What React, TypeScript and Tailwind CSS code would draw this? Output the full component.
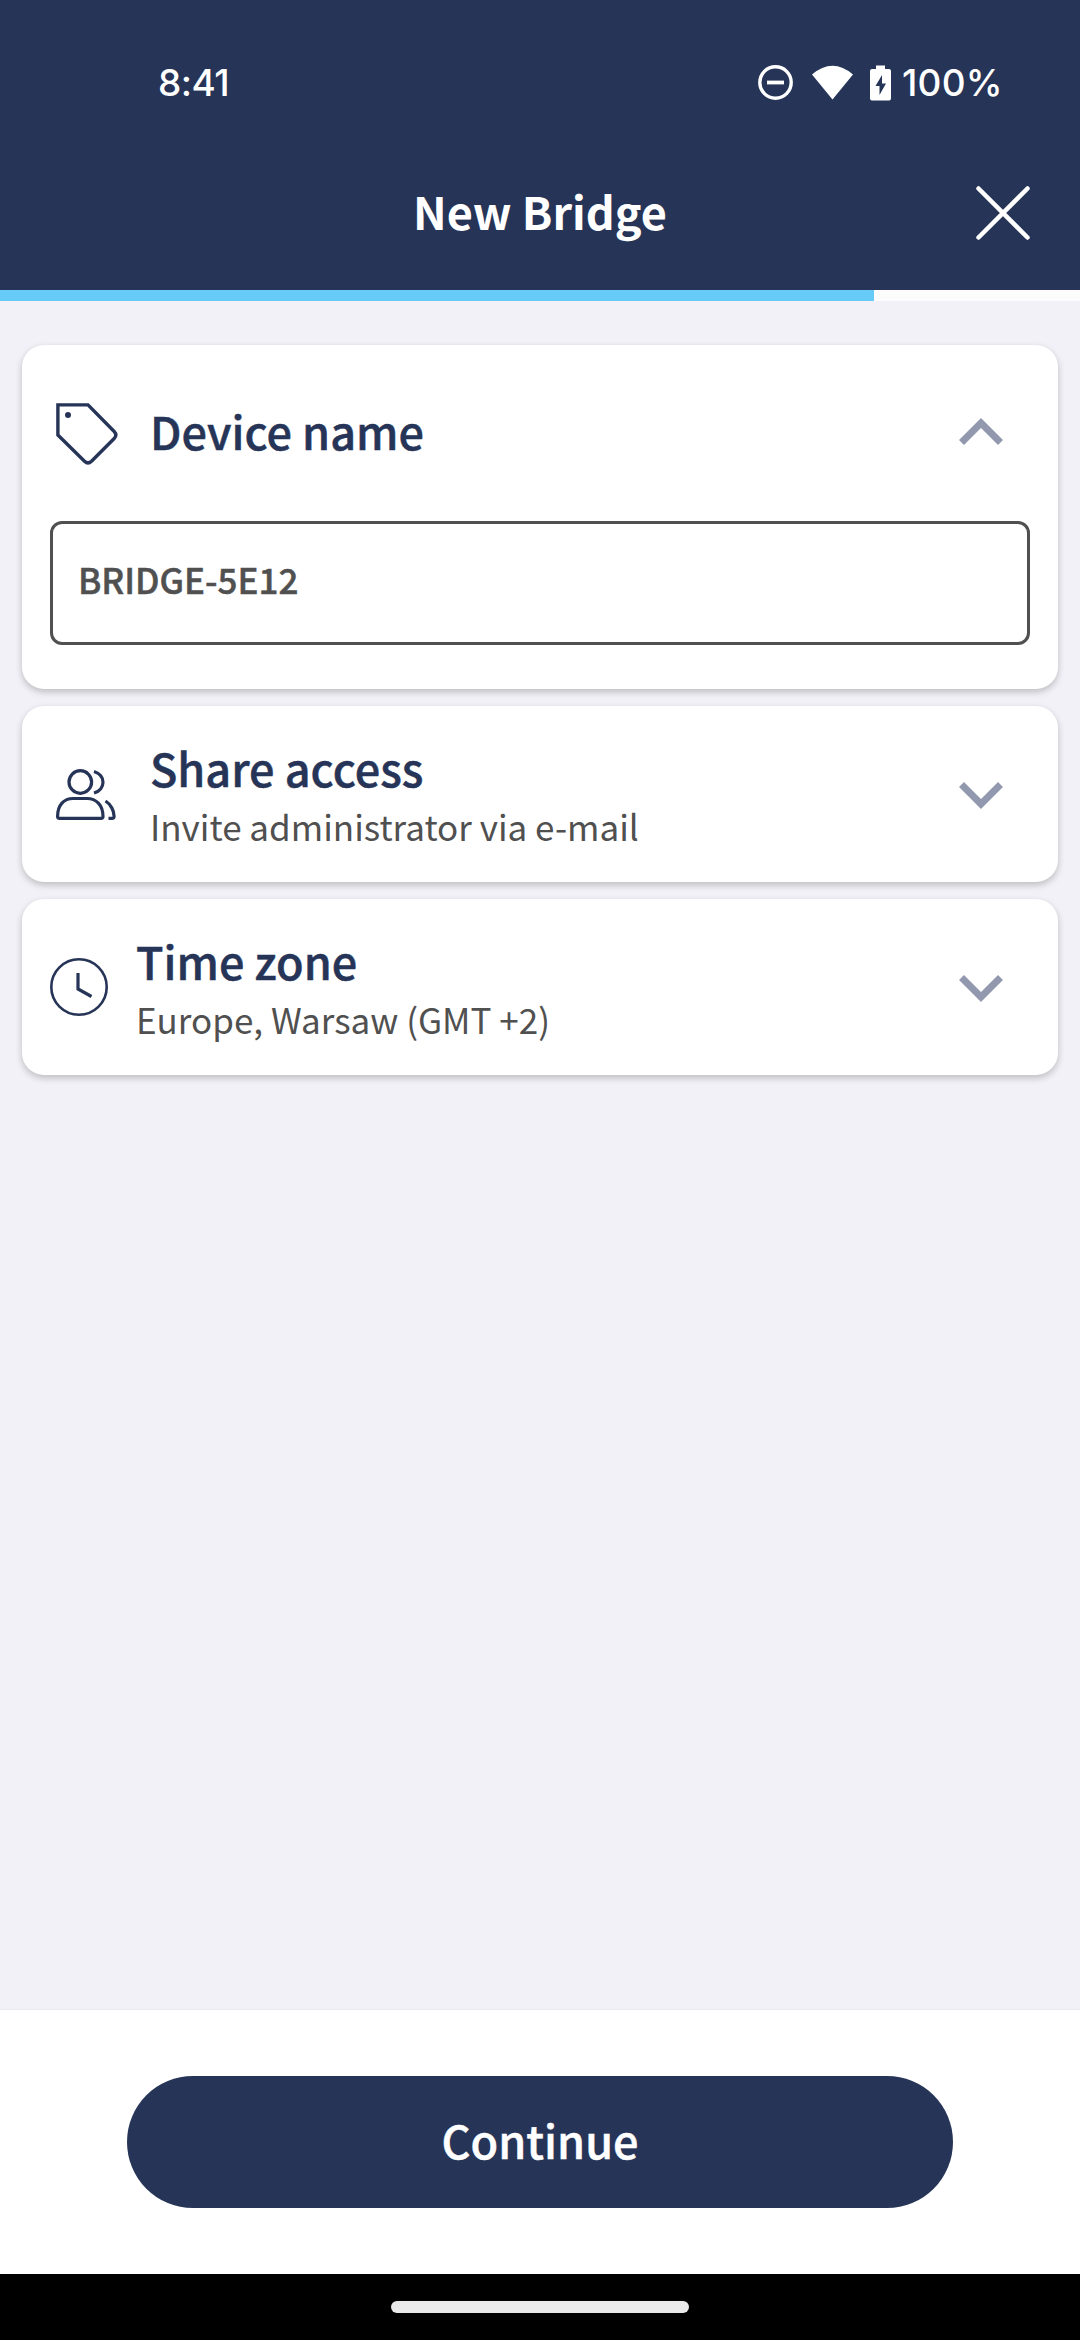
import React from "react";

const CJK = "font-['Noto_Sans_CJK_SC','Noto_Sans',sans-serif]";
const SEMIBOLD = "font-medium [-webkit-text-stroke:0.5px_currentColor]";

function Chevron({ up = false }: { up?: boolean }) {
  return (
    <svg className="mr-[27px] h-[27px] w-[44px] shrink-0" viewBox="0 0 44 27" fill="none">
      <path d={up ? "M2.5 24.5L22 5L41.5 24.5" : "M2.5 2.5L22 22L41.5 2.5"} stroke="#9299AE" strokeWidth="7" />
    </svg>
  );
}

function TagIcon() {
  return (
    <svg className="mt-[2px] ml-[6px] h-[62px] w-[62px]" viewBox="0 0 62 62" fill="none" stroke="#263457" strokeWidth="3.4">
      <path d="M1.9 1.9H32L58.2 28.500Q61.500 32 58.200 35.500L35.500 58.200Q32 61.500 28.500 58.200L1.900 32Z" />
      <circle cx="12" cy="12" r="3" fill="#263457" stroke="none" />
    </svg>
  );
}

function UsersIcon() {
  return (
    <svg className="ml-[6px] h-[51px] w-[60px]" viewBox="0 0 60 51" fill="none" stroke="#263457" strokeWidth="3.200">
      <circle cx="24.300" cy="13" r="11.300" />
      <path d="M3.500 49.300Q1.600 49.300 1.600 47.500C1.600 36 8 29.500 17 29.500H31C40 29.500 47 36 47 47.500Q47 49.300 45 49.300Z" />
      <path d="M38 2.500C50 6 50 20.500 38 24" />
      <path d="M49.500 32C54.500 35 58.500 42 58 48Q57.800 49.300 56 49.300H52.500" />
    </svg>
  );
}

function ClockIcon() {
  return (
    <svg className="h-[58px] w-[58px]" viewBox="0 0 58 58" fill="none" stroke="#263457">
      <circle cx="29" cy="29" r="27.700" strokeWidth="2.600" />
      <path d="M28 15V31L41.500 38.500" strokeWidth="3.200" />
    </svg>
  );
}

function StatusBar() {
  return (
    <div className="flex h-[136px] items-center pt-[29px] pr-[78px] pl-[158px] font-['Inter',sans-serif] text-[37px] leading-none font-medium text-white">
      <span className="tracking-[-0.5px]">8:41</span>
      <div className="ml-auto flex items-center">
        <svg className="h-[36px] w-[134px]" viewBox="0 0 134 36" fill="none">
          <circle cx="17.500" cy="17.500" r="15.700" stroke="white" strokeWidth="3.400" />
          <path d="M9 17.500H26" stroke="white" strokeWidth="3.800" />
          <path d="M54 9.500Q74.500 -8 95 9.500L74.500 34.500Z" fill="white" />
          <path fillRule="evenodd" d="M118 0.500H127V4H131Q133 4 133 6V33.500Q133 35.500 131 35.500H114Q112 35.500 112 33.500V6Q112 4 114 4H118ZM124 10L117.500 21H121.500V30L128 18.500H124Z" fill="white" />
        </svg>
        <span className="ml-[10px] w-[100px] tracking-[0.2px] whitespace-nowrap">100%</span>
      </div>
    </div>
  );
}

function Section({ icon, title, subtitle, titleGap }: { icon: React.ReactNode; title: string; subtitle: string; titleGap: string }) {
  return (
    <section className="flex h-[176px] items-center rounded-[22px] bg-white px-7 shadow-[0_3px_7px_rgba(0,0,0,0.22)]">
      {icon}
      <div className={titleGap}>
        <h2 className={`text-[45px] leading-[60px] text-[#263457] ${SEMIBOLD}`}>{title}</h2>
        <p className="pt-[4px] text-[35px] leading-[48px] text-[#505050]">{subtitle}</p>
      </div>
      <div className="ml-auto pt-[2px]">
        <Chevron />
      </div>
    </section>
  );
}

export default function App() {
  return (
    <div className={`flex h-[2340px] w-[1080px] flex-col bg-[#F2F1F7] ${CJK}`}>
      <header className="h-[290px] bg-[#263457]">
        <StatusBar />
        <div className="grid h-[154px] grid-cols-[1fr_auto_1fr] items-center">
          <h1 className="col-start-2 pb-[4px] text-[45px] leading-[60px] font-bold text-white">New Bridge</h1>
          <svg className="mr-[50px] mb-[1px] h-[54px] w-[54px] justify-self-end" viewBox="0 0 54 54" stroke="white" strokeWidth="4.500" strokeLinecap="round">
            <path d="M2.500 2.500L51.500 51.500M51.500 2.500L2.500 51.500" />
          </svg>
        </div>
      </header>
      <div className="h-[11px] bg-[#FCFCFC]">
        <div className="h-full w-[874px] bg-[#67CBF8]" />
      </div>

      <main className="flex flex-1 flex-col gap-[17px] px-[22px] pt-[44px]">
        <section className="h-[344px] rounded-[22px] bg-white px-7 shadow-[0_3px_7px_rgba(0,0,0,0.22)]">
          <div className="flex h-[176px] items-center">
            <TagIcon />
            <h2 className={`ml-[32px] pb-[4px] text-[45px] leading-[60px] text-[#263457] ${SEMIBOLD}`}>Device name</h2>
            <div className="ml-auto pb-[3px]">
              <Chevron up />
            </div>
          </div>
          <div className="flex h-[124px] items-center rounded-[12px] border-[3px] border-[#505050] px-[25px] pb-[9px] text-[35px] leading-[52px] font-medium text-[#505050] [-webkit-text-stroke:0.5px_currentColor]">
            BRIDGE-5E12
          </div>
        </section>
        <Section icon={<UsersIcon />} title="Share access" subtitle="Invite administrator via e-mail" titleGap="ml-[34px]" />
        <Section icon={<ClockIcon />} title="Time zone" subtitle="Europe, Warsaw (GMT +2)" titleGap="ml-[28px]" />
      </main>

      <footer className="h-[265px] border-t border-[#EAEAEA] bg-white px-[127px] pt-[66px]">
        <button className={`flex h-[132px] w-full items-center justify-center rounded-full bg-[#263457] pb-[4px] text-[45px] leading-[60px] text-white ${SEMIBOLD}`}>
          Continue
        </button>
      </footer>
      <div className="flex h-[66px] items-center justify-center bg-black">
        <div className="h-[12px] w-[298px] rounded-[6px] bg-[#EAEAEA]" />
      </div>
    </div>
  );
}
